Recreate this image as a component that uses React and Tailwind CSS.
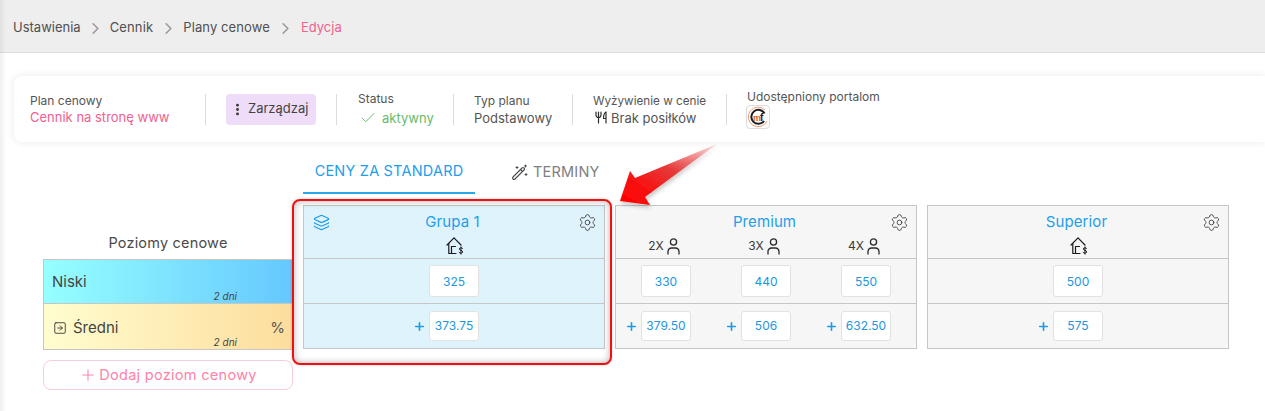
import React from "react";
import { ChevronRight, Check, EllipsisVertical, Layers, Settings, SquareArrowRight, Plus } from "lucide-react";

const HomeDollar = () => (
  <svg width="18" height="18" viewBox="0 0 18 18" fill="none" stroke="#1a1a1a" strokeWidth="1.2" strokeLinecap="round" strokeLinejoin="round">
    <path d="M1 8 L8 0.8 L15 8" />
    <path d="M2.8 6.5 V16.5 H10" />
    <path d="M5.5 16.5 V9.5 H9.5" />
    <path d="M16.6 11.3 C16 10.5 13.3 10.5 13.3 12 C13.3 13.6 16.7 13.2 16.7 14.9 C16.7 16.4 14 16.4 13.1 15.5 M15 9.8 V17.2" strokeWidth="1" />
  </svg>
);

const Person = () => (
  <svg width="13" height="17" viewBox="0 0 13 17" fill="none" stroke="#2a2a2a" strokeWidth="1.3" strokeLinecap="round">
    <circle cx="6.5" cy="4" r="3.1" />
    <path d="M1 16 V13.5 A3.5 3.5 0 0 1 4.5 10 H8.5 A3.5 3.5 0 0 1 12 13.5 V16" />
  </svg>
);

const Fork = () => (
  <svg width="13" height="13" viewBox="0 0 13 13" fill="none" stroke="#2e2e2e" strokeWidth="1.2" strokeLinecap="round" strokeLinejoin="round">
    <path d="M1 1 V4 A2.5 2.5 0 0 0 6 4 V1 M3.5 1 V12" />
    <path d="M11 1 V12 M11 1 C9 2 8.5 4.5 8.5 7.5 H11" />
  </svg>
);

const Wand = () => (
  <svg width="16" height="16" viewBox="0 0 16 16" fill="none" stroke="#4a4a4a" strokeWidth="1.1" strokeLinecap="round" strokeLinejoin="round">
    <path d="M1 13 L10 4 A1.2 1.2 0 0 1 12 6 L3 15 A1.4 1.4 0 0 1 1 13 Z" />
    <path d="M8.5 5.5 L10.5 7.5" />
    <path d="M5 2.5 V4.5 M4 3.5 H6 M13.5 1 V3 M12.5 2 H14.5 M14 9.5 V11.5 M13 10.5 H15" strokeWidth="1" />
  </svg>
);

const Logo = () => (
  <div className="w-[24px] h-[24px] rounded-[4px] border border-[#dddddd] bg-white flex items-center justify-center">
    <svg width="22" height="22" viewBox="0 0 22 22" fill="none">
      <path d="M18 4 A9.8 9.8 0 1 0 20 15" stroke="#e8936b" strokeWidth="0.9" />
      <path d="M17 15 A7 7 0 1 1 17.5 7.5" stroke="#1d1d1d" strokeWidth="2" />
      <text x="6" y="14.5" fontSize="9" fontWeight="700" fontFamily="Liberation Sans, sans-serif" fill="#d9622b">m</text>
      <text x="13" y="14.5" fontSize="10" fontWeight="700" fontFamily="Liberation Sans, sans-serif" fill="#1d1d1d">f</text>
    </svg>
  </div>
);

const Cell = ({ children, className = "" }) => (
  <div className={`border-l border-[#dcdcdc] h-[31px] shrink-0 ${className}`}>{children}</div>
);

const Price = ({ value, nudge }) => (
  <div className={`w-[50px] bg-white border border-[#e2e2e2] rounded-[3px] flex items-center justify-center text-[12px] text-[#2196e0] ${nudge ? "pt-[2px]" : ""}`}>
    {value}
  </div>
);

const PriceSlot = ({ value, plus }) => (
  <div className="grid grid-cols-[1fr_50px_1fr] items-stretch flex-1">
    <div className="flex items-center justify-end pr-[3px]">
      {plus && <Plus size={13} strokeWidth={3} className="text-[#1c9be6]" />}
    </div>
    <Price value={value} nudge={!plus} />
  </div>
);

const Group = ({ name, active, occupancy, low, high, layers }) => (
  <div className={`w-[302px] h-[144px] border border-[#c6c6c6] shrink-0 flex flex-col ${active ? "bg-[#dff3fd]" : "bg-[#f6f6f6]"}`}>
    <div className="h-[53px] border-b border-[#c6c6c6] flex flex-col shrink-0">
      <div className="grid grid-cols-[1fr_auto_1fr] items-center h-[27px] mt-[3px] pl-[9px] pr-[7px]">
        <div>{layers && <Layers size={17} strokeWidth={1.6} className="text-[#1c9be6]" />}</div>
        <div className="text-[15px] text-[#1e9eea] tracking-[0.1px] pr-[5px]">{name}</div>
        <div className="flex justify-end">
          <Settings size={19} strokeWidth={1.15} className="text-[#444444]" />
        </div>
      </div>
      {occupancy ? (
        <div className="flex mt-[1px]">
          {occupancy.map((o) => (
            <div key={o} className="flex-1 flex items-center justify-center gap-[3px] text-[12px] text-[#3a3a3a] pr-[4px]">
              <span>{o}</span>
              <Person />
            </div>
          ))}
        </div>
      ) : (
        <div className="flex justify-center mt-[1px] pl-[1px]">
          <HomeDollar />
        </div>
      )}
    </div>
    <div className="h-[45px] border-b border-[#c6c6c6] flex py-[6px] shrink-0">
      {low.map((v) => <PriceSlot key={v} value={v} />)}
    </div>
    <div className="flex-1 flex py-[7px]">
      {high.map((v) => <PriceSlot key={v} value={v} plus />)}
    </div>
  </div>
);

export default function App() {
  return (
    <div className="relative w-[1265px] h-[411px] overflow-hidden bg-white text-[#4a4a4a]" style={{ fontFamily: "Inter, 'Noto Sans', sans-serif" }}>
      <div className="h-[53px] bg-[#eeeeee] border-b border-[#dedede] flex items-center pl-[13px] text-[13px] text-[#505050] pt-[4px]">
        <span>Ustawienia</span>
        <ChevronRight size={19} strokeWidth={2} className="text-[#999999] mx-[5px]" />
        <span className="tracking-[0.15px]">Cennik</span>
        <ChevronRight size={19} strokeWidth={2} className="text-[#999999] ml-[6px] mr-[5px]" />
        <span className="tracking-[0.1px]">Plany cenowe</span>
        <ChevronRight size={19} strokeWidth={2} className="text-[#999999] ml-[6px] mr-[6px]" />
        <span className="text-[#f2608f]">Edycja</span>
      </div>

      <div className="ml-[14px] mt-[23px] h-[66px] bg-white rounded-l-[8px] shadow-[0_0_8px_rgba(0,0,0,0.09)] flex items-center text-[12px]">
        <div className="w-[191px] pl-[16px] shrink-0 leading-[16px]">
          <div className="text-[#555555]">Plan cenowy</div>
          <div className="text-[#f2608f] text-[13px]">Cennik na stronę www</div>
        </div>
        <Cell className="w-[131px] pl-[20px]">
          <div className="w-[90px] h-[31px] rounded-[4px] bg-[#eedcf9] flex items-center pl-[4px] gap-[3px] text-[13px] text-[#444444]">
            <EllipsisVertical size={15} strokeWidth={2.6} className="text-[#333333]" />
            <span>Zarządzaj</span>
          </div>
        </Cell>
        <Cell className="w-[117px] pl-[21px] leading-[16px]">
          <div className="text-[#555555] -mt-[3px]">Status</div>
          <div className="flex items-center gap-[5px] text-[#66bb6a] text-[13px] mt-[2px] pl-[1px]">
            <Check size={18} strokeWidth={1.3} />
            <span>aktywny</span>
          </div>
        </Cell>
        <Cell className="w-[119px] pl-[20px] leading-[16px]">
          <div className="text-[#555555] -mt-[1px]">Typ planu</div>
          <div className="text-[#555555] text-[13px] mt-[1px]">Podstawowy</div>
        </Cell>
        <Cell className="w-[154px] pl-[20px] leading-[16px]">
          <div className="text-[#555555] text-[11.7px] -mt-[1px]">Wyżywienie w cenie</div>
          <div className="flex items-center gap-[3px] text-[#555555] text-[13px] mt-[1px] pl-[2px]">
            <Fork />
            <span>Brak posiłków</span>
          </div>
        </Cell>
        <Cell className="pl-[20px] leading-[16px] w-[300px]">
          <div className="text-[#555555] -mt-[5px]">Udostępniony portalom</div>
          <div className="-ml-[1px]"><Logo /></div>
        </Cell>
      </div>

      <div className="ml-[303px] mt-[8px] h-[44px] flex text-[14.5px] tracking-[0.2px]">
        <div className="w-[172px] border-b-2 border-[#29a7ea] text-[#1e9eea] flex items-center justify-center">
          CENY ZA STANDARD
        </div>
        <div className="flex items-center gap-[5px] pl-[37px] text-[#808080]">
          <Wand />
          <span>TERMINY</span>
        </div>
      </div>

      <div className="ml-[43px] mt-[11px] flex gap-[10px]">
        <div className="w-[250px] shrink-0 flex flex-col">
          <div className="h-[54px] flex items-end justify-center pb-[5px] text-[14.5px] text-[#4a4a4a] tracking-[0.2px]">
            Poziomy cenowe
          </div>
          <div className="border border-[#c6c6c6]">
            <div className="h-[44px] relative flex items-center pl-[8px] pt-[2px] text-[15px] text-[#444444] bg-gradient-to-r from-[#96ffff] to-[#66c8ff] border-b border-[#c6c6c6]">
              Niski
              <span className="absolute right-[55px] -bottom-[1px] text-[10px] italic text-[#444444]">2 dni</span>
            </div>
            <div className="h-[45px] relative flex items-center pl-[9px] pt-[3px] gap-[6px] text-[15px] text-[#444444] bg-gradient-to-r from-[#fffdcf] to-[#fddd9d]">
              <SquareArrowRight size={14} strokeWidth={1.5} className="text-[#333333]" />
              <span>Średni</span>
              <span className="ml-auto mr-[7px] text-[#555555]">%</span>
              <span className="absolute right-[55px] -bottom-[1px] text-[10px] italic text-[#444444]">2 dni</span>
            </div>
          </div>
          <div className="mt-[10px] h-[30px] border border-[#f9ccdc] rounded-[8px] flex items-center justify-center gap-[2px] text-[14.5px] text-[#ff82a8] tracking-[0.3px]">
            <Plus size={18} strokeWidth={1.4} />
            <span>Dodaj poziom cenowy</span>
          </div>
        </div>
        <Group name="Grupa 1" active layers low={["325"]} high={["373.75"]} />
        <Group name="Premium" occupancy={["2X", "3X", "4X"]} low={["330", "440", "550"]} high={["379.50", "506", "632.50"]} />
        <Group name="Superior" low={["500"]} high={["575"]} />
      </div>

      <div className="absolute left-[292px] top-[199px] w-[320px] h-[166px] rounded-[8px] border-2 border-[#f01010] shadow-[inset_0_0_7px_rgba(0,0,0,0.3),0_0_3px_rgba(0,0,0,0.2)] pointer-events-none" />

      <svg className="absolute left-[600px] top-[140px] pointer-events-none" width="130" height="75" viewBox="0 0 130 75">
        <defs>
          <linearGradient id="arrowFill" x1="1" y1="0" x2="0" y2="1">
            <stop offset="0" stopColor="#f04040" stopOpacity="0.15" />
            <stop offset="0.45" stopColor="#e63030" stopOpacity="0.95" />
            <stop offset="0.75" stopColor="#f80f0f" />
            <stop offset="1" stopColor="#ff0000" />
          </linearGradient>
          <filter id="arrowShadow" x="-20%" y="-20%" width="140%" height="140%">
            <feDropShadow dx="1" dy="3" stdDeviation="2" floodColor="#000000" floodOpacity="0.22" />
          </filter>
        </defs>
        <polygon points="20,61 30,31 35,38 117,4 45,57 50,65" fill="url(#arrowFill)" filter="url(#arrowShadow)" />
      </svg>

      <div className="absolute left-0 top-0 w-[6px] h-full bg-gradient-to-r from-[rgba(0,0,0,0.06)] to-transparent pointer-events-none" />
    </div>
  );
}
